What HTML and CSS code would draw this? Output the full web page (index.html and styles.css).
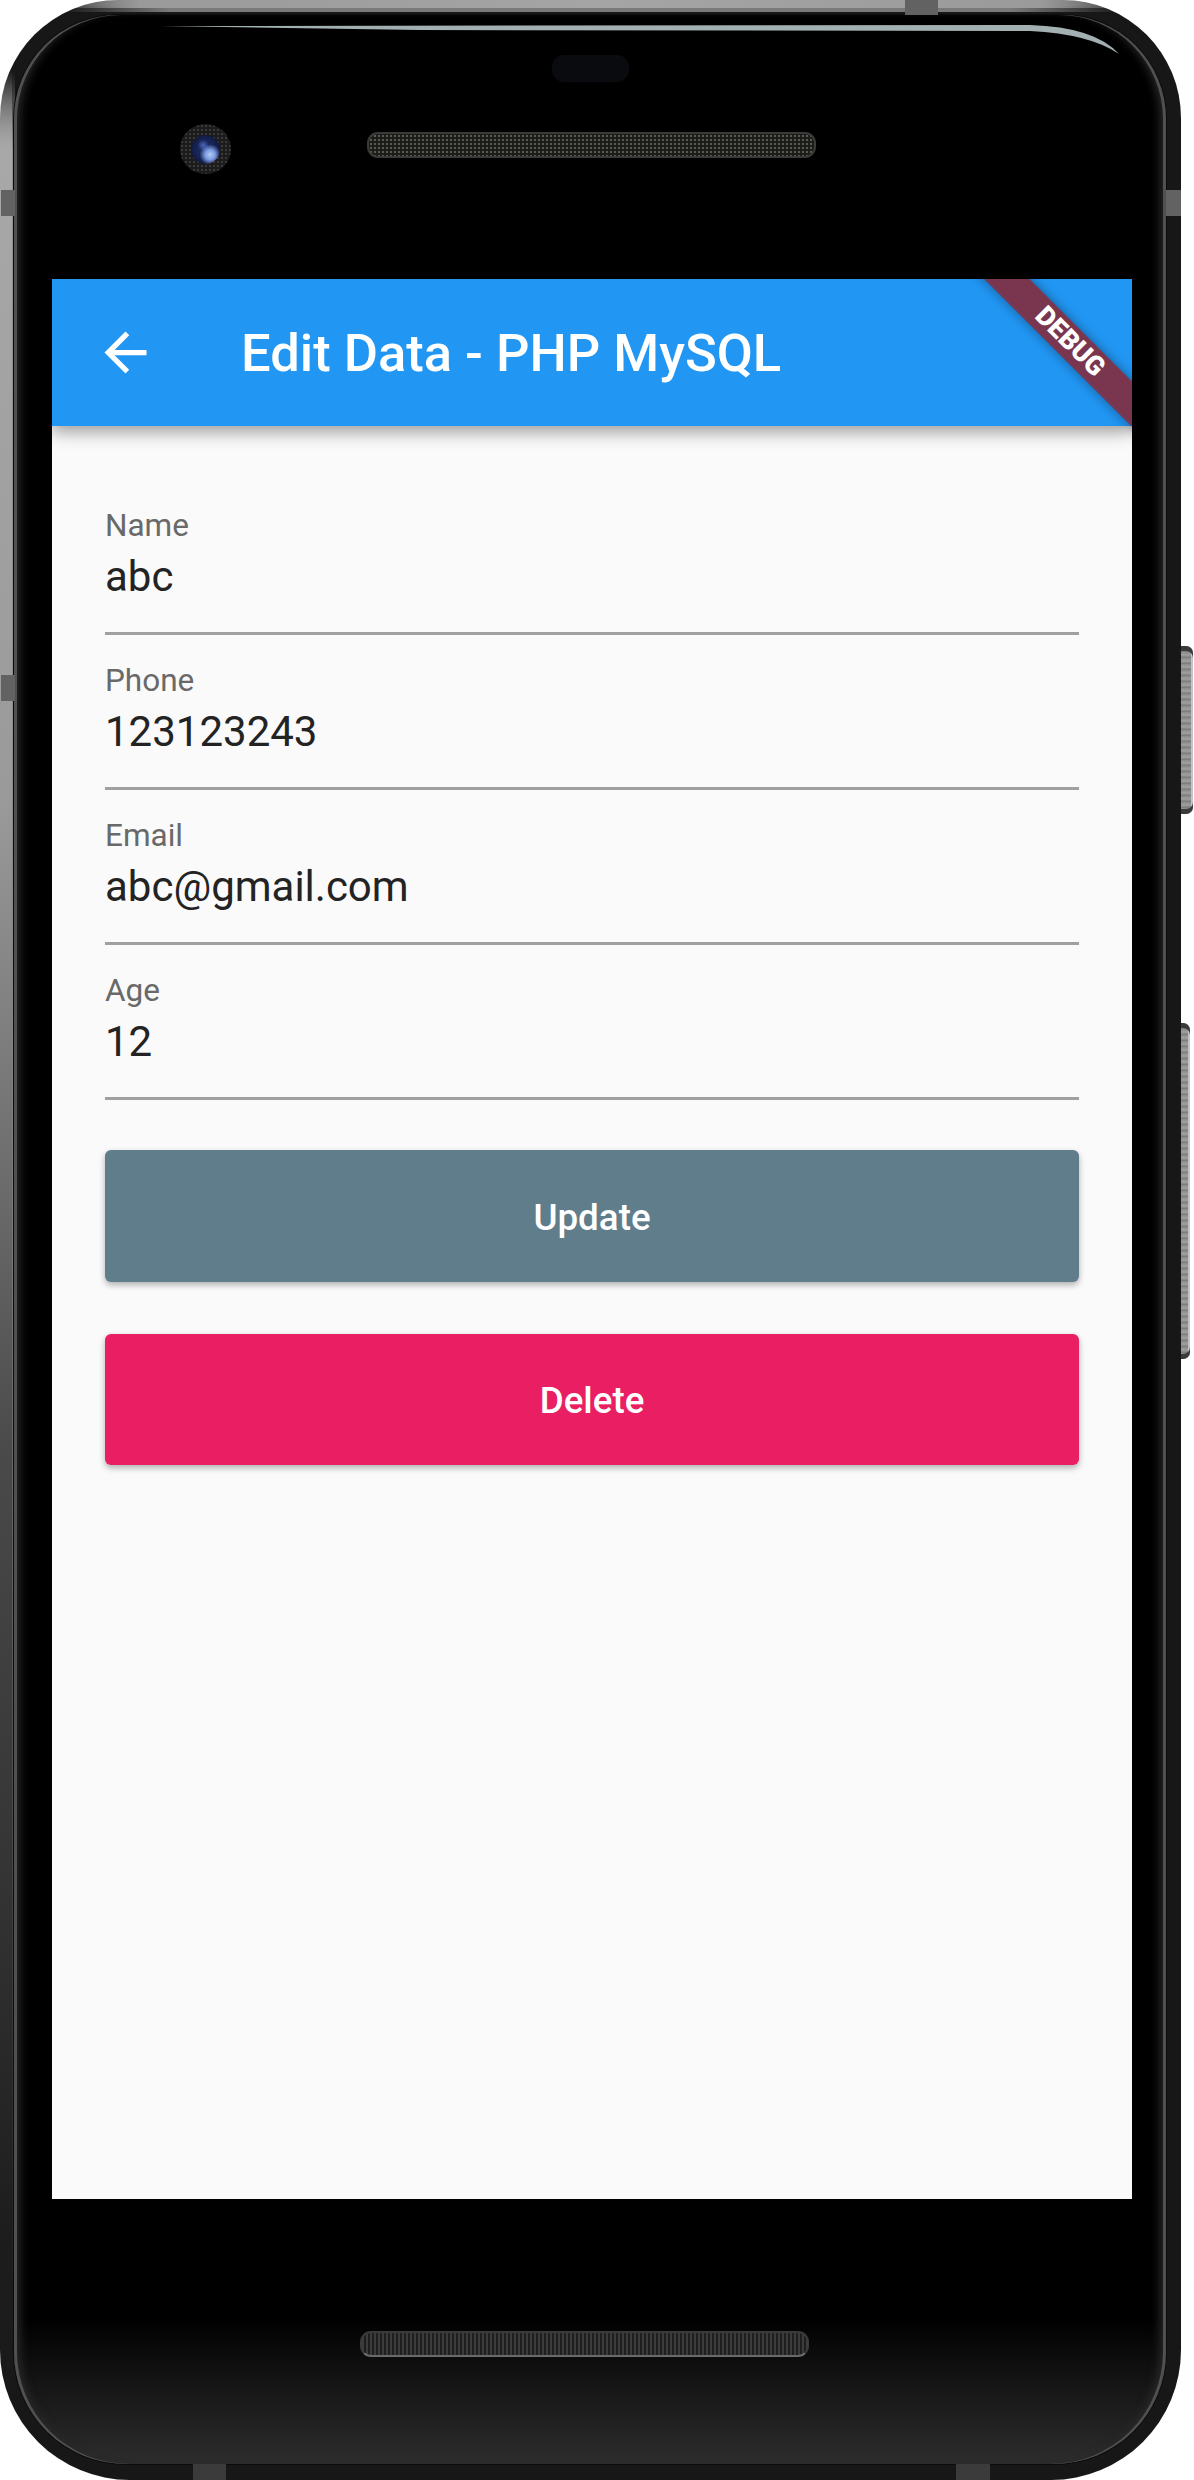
FILE: index.html
```html
<!DOCTYPE html>
<html lang="en">
<head>
    <meta charset="UTF-8">
    <meta name="viewport" content="width=device-width, initial-scale=1.0">
    <title>Edit Data - PHP MySQL</title>
    <link rel="stylesheet" href="styles.css">
</head>
<body>
    <div class="device">
        <span class="side-key key-top"></span>
        <span class="side-key key-bottom"></span>
        <div class="frame">
            <div class="bezel">
                <svg class="glare" viewBox="0 0 1194 80" width="1194" height="80">
                    <path d="M160 26 L1030 25 Q1095 27 1119 54 Q1090 34 1030 31 L420 30 Z" fill="#a3b0b2"/>
                </svg>
                <span class="sensor"></span>
                <span class="camera"><span class="lens"></span></span>
                <span class="speaker speaker-top"></span>
                <span class="speaker speaker-bottom"></span>

                <div class="screen">
                    <header class="appbar">
                        <svg class="back" viewBox="0 0 24 24" width="63" height="63">
                            <path d="M20 11H7.83l5.59-5.59L12 4l-8 8 8 8 1.41-1.41L7.83 13H20v-2z" fill="#fff"/>
                        </svg>
                        <h1>Edit Data - PHP MySQL</h1>
                    </header>
                    <div class="banner">DEBUG</div>

                    <form class="edit-form">
                        <div class="fields">
                            <div class="field">
                                <label>Name</label>
                                <div class="value">abc</div>
                            </div>
                            <div class="field">
                                <label>Phone</label>
                                <div class="value">123123243</div>
                            </div>
                            <div class="field">
                                <label>Email</label>
                                <div class="value">abc@gmail.com</div>
                            </div>
                            <div class="field">
                                <label>Age</label>
                                <div class="value">12</div>
                            </div>
                        </div>
                        <button type="button" class="btn btn-update">Update</button>
                        <button type="button" class="btn btn-delete">Delete</button>
                    </form>
                </div>
            </div>
        </div>
        <span class="band band-top"></span>
        <span class="band band-left-1"></span>
        <span class="band band-left-2"></span>
        <span class="band band-right-1"></span>
        <span class="band band-bottom-1"></span>
        <span class="band band-bottom-2"></span>
    </div>
</body>
</html>
```

FILE: styles.css
```css
* { box-sizing: border-box; }
body { margin: 0; background: #fff; font-family: Roboto, "Liberation Sans", sans-serif; }

.device { position: relative; width: 1194px; height: 2480px; padding-right: 13px; }
.frame {
    height: 100%;
    padding: 15px 15px 16px 14px;
    border-radius: 118px 118px 130px 130px;
    background-color: #171717;
    background-image:
        linear-gradient(180deg, transparent 70px, #a8a8a8 150px, #9a9a9a 800px, #6a6a6a 1200px, #4a4a4a 1450px, #333 1900px, #1c1c1c 2250px, transparent 2400px),
        linear-gradient(180deg, transparent 70px, #8f8f8f 150px, #8a8a8a 800px, #7c7c7c 1200px, #5e5e5e 1600px, #3a3a3a 2000px, #1c1c1c 2300px, transparent 2400px),
        linear-gradient(90deg, transparent 50px, #9a9a9a 140px, #a5a5a5 600px, #9a9a9a 1040px, transparent 1140px),
        linear-gradient(90deg, transparent 70px, #5c5c5c 150px, #5c5c5c 1030px, transparent 1120px),
        linear-gradient(90deg, transparent 60px, #7a7a7a 170px, #7a7a7a 1010px, transparent 1125px);
    background-size: 12px 100%, 15px 100%, 100% 8px, 100% 6px, 100% 12px;
    background-position: 1px 0, right 0 top 0, 0 2px, 0 10px, 0 bottom 2px;
    background-repeat: no-repeat;
}
.bezel {
    position: relative;
    height: 100%;
    padding: 264px 0 0 38px;
    border-radius: 104px 104px 112px 112px;
    background: linear-gradient(180deg, #000 0, #000 94%, #111 96.2%, #2d2d2d 100%);
    box-shadow: 0 0 0 1px #0c0c0c, inset 3px 0 0 #505050, inset -3px 0 0 #505050, inset 12px 0 10px -6px #2a2a2a, inset -12px 0 10px -6px #2a2a2a;
}

.glare { position: absolute; left: -14px; top: -15px; }
.sensor { position: absolute; left: 538px; top: 40px; width: 77px; height: 27px; border-radius: 12px; background: #0a0b0e; }
.camera {
    position: absolute; left: 166px; top: 109px; width: 51px; height: 50px; border-radius: 50%;
    display: flex; align-items: center; justify-content: center;
    background: radial-gradient(#3a3a3a 1px, #1c1c1c 1.5px) 0 0 / 4px 4px;
}
.lens {
    width: 29px; height: 29px; border-radius: 50%;
    background:
        radial-gradient(circle at 66% 68%, #b4ccf5 0, #7d9ce2 18%, transparent 38%),
        radial-gradient(circle at 42% 35%, #4a66b8 0, transparent 22%),
        radial-gradient(circle, #1f3272 0, #141f4c 60%, #070a18 100%);
}
.speaker {
    position: absolute; height: 26px; border-radius: 11px; border: 2px solid #3a3a3a;
}
.speaker-top {
    left: 353px; top: 117px; width: 449px;
    background: radial-gradient(#5a5a50 1px, #1b1b19 1.6px) 0 0 / 4px 4px;
}
.speaker-bottom {
    left: 346px; top: 2316px; width: 449px; border-bottom-color: #6a6a6a;
    background: repeating-linear-gradient(90deg, #3c3c3c 0, #3c3c3c 2px, #1e1e1e 2px, #1e1e1e 4px);
}

.screen { position: relative; width: 1080px; height: 1920px; overflow: hidden; background: #fafafa; }

.appbar {
    display: flex; align-items: center;
    height: 147px; padding-left: 42px;
    background: #2196f3;
    box-shadow: 0 6px 16px rgba(0, 0, 0, 0.38);
}
.appbar h1 { margin: 0 0 0 84px; font-size: 52.5px; font-weight: 500; color: #fff; white-space: nowrap; }
.back { flex: none; }

.banner {
    position: absolute; top: 46.75px; right: -87.5px;
    width: 300px; height: 31.5px;
    transform: rotate(45deg);
    background: #7b364f;
    box-shadow: 0 0 12px rgba(0, 0, 0, 0.4);
    color: #fff; font-size: 26.8px; font-weight: 900; line-height: 31.5px; text-align: center;
}

.edit-form { padding: 54px 53px 0; }
.fields { margin-bottom: 50px; }
.field { height: 155px; border-bottom: 3px solid #a0a0a0; }
.field label { display: block; padding-top: 27px; font-size: 31.5px; line-height: 37px; color: #696969; }
.field .value { margin-top: 8px; font-size: 42px; line-height: 50px; color: #232323; }

.btn {
    display: block; width: 100%; height: 131.5px; margin-bottom: 52px; padding: 3px 0 0;
    border: none; border-radius: 6px;
    color: #fff; font-family: inherit; font-size: 36.75px; font-weight: 500;
    box-shadow: 0 3px 6px rgba(0, 0, 0, 0.3);
}
.btn-update { background: #607d8b; }
.btn-delete { background: #e91e63; }

.side-key {
    position: absolute; border-radius: 0 7px 7px 0;
    background: repeating-linear-gradient(180deg, #8a8a8a 0, #a0a0a0 3px, #777 6px);
    box-shadow: inset 0 5px 0 #3a3a3a, inset 0 -5px 0 #3a3a3a, inset -2px 0 0 #c4c4c4;
}
.key-top { left: 1181px; top: 646px; width: 12px; height: 168px; }
.key-bottom { left: 1181px; top: 1023px; width: 9px; height: 336px; }

.band { position: absolute; background: #626262; }
.band-top { left: 905px; top: 0; width: 33px; height: 15px; }
.band-left-1 { left: 1px; top: 190px; width: 14px; height: 26px; }
.band-left-2 { left: 1px; top: 675px; width: 14px; height: 26px; }
.band-right-1 { left: 1166px; top: 190px; width: 15px; height: 26px; }
.band-bottom-1 { left: 193px; top: 2464px; width: 33px; height: 16px; background: #3b3b3b; }
.band-bottom-2 { left: 956px; top: 2464px; width: 34px; height: 16px; background: #3b3b3b; }
```
